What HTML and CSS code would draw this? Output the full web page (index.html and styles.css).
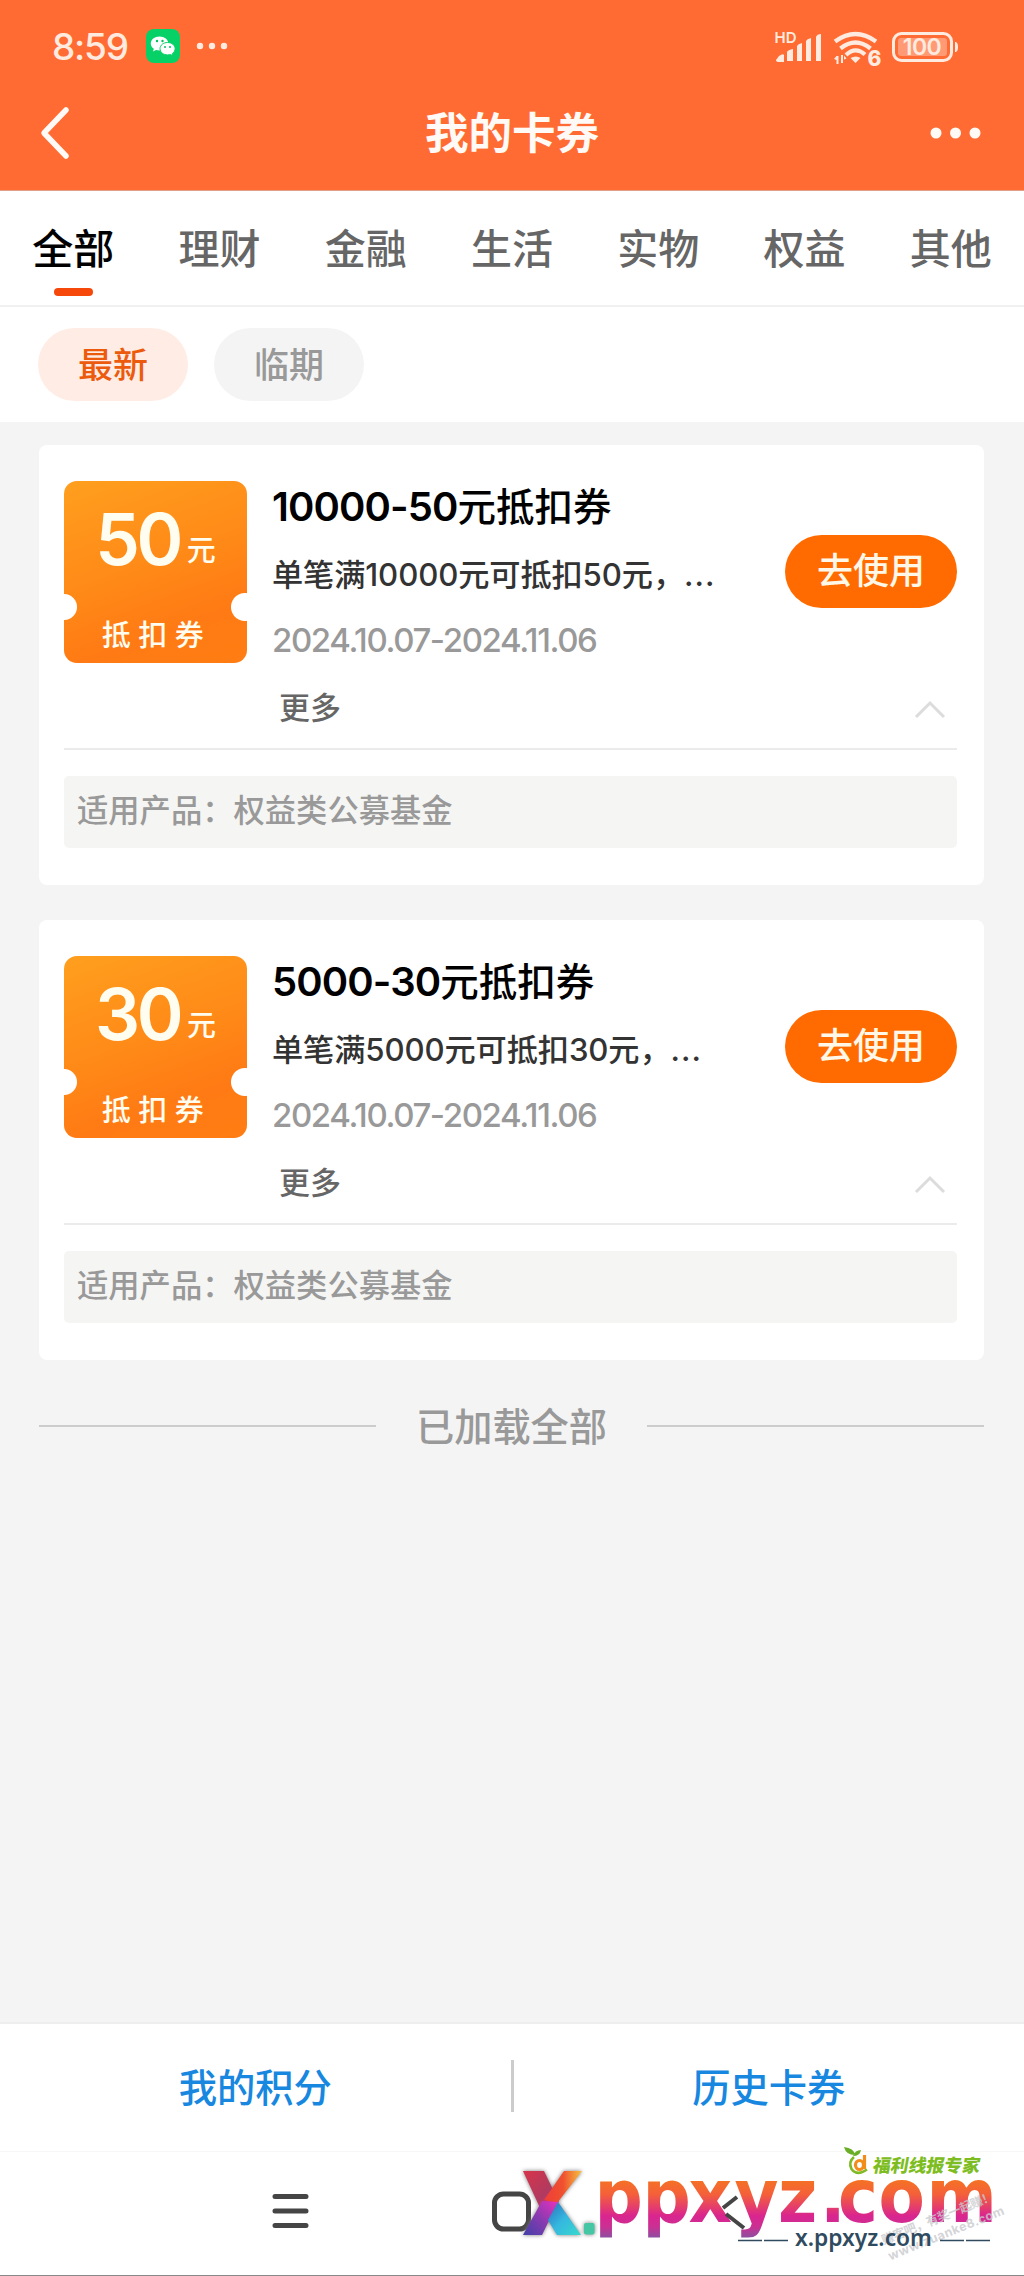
FILE: index.html
```html
<!DOCTYPE html>
<html lang="zh-CN">
<head>
<meta charset="utf-8">
<title>我的卡券</title>
<link rel="stylesheet" href="styles.css">
</head>
<body>
<div class="screen">
  <header class="header">
    <div class="status">
      <div class="status-left">
        <span class="time">8:59</span>
        <svg class="wechat" width="36" height="36" viewBox="0 0 36 36">
          <rect x="1" y="1" width="34" height="34" rx="8" fill="#06d166"/>
          <path d="M14.500 8.500c-5 0-8.700 3.100-8.700 7 0 2.200 1.100 4 3 5.300l-.8 2.700 3-1.500c1 .3 2.200.5 3.500.5 5 0 8.800-3 8.800-7s-3.800-7-8.800-7z" fill="#fff"/>
          <path d="M22.600 14.500c-4.300 0-7.600 2.700-7.600 6.200s3.300 6.200 7.600 6.200c1 0 2-.1 2.900-.4l2.500 1.300-.6-2.300c1.700-1.200 2.700-2.900 2.700-4.800 0-3.500-3.300-6.200-7.500-6.200z" fill="#fff" stroke="#06d166" stroke-width="1"/>
          <g fill="#06c160"><circle cx="12" cy="13" r="1.200"/><circle cx="17.500" cy="13" r="1.200"/><circle cx="20" cy="19" r="1"/><circle cx="25" cy="19" r="1"/></g>
        </svg>
        <svg width="34" height="10" viewBox="0 0 34 10" fill="#ffeadf"><circle cx="5" cy="5" r="3.200"/><circle cx="17" cy="5" r="3.200"/><circle cx="29" cy="5" r="3.200"/></svg>
      </div>
      <svg class="status-icons" width="186" height="48" viewBox="0 0 186 48">
        <g fill="#ffeadf">
          <text class="hd" x="0.500" y="15.500" textLength="22" lengthAdjust="spacingAndGlyphs">HD</text>
          <path d="M2 33l3-4q4-3 5-1v7H5q-3 0-3-2zM13 25q1-2 6-3v12h-6zM23 19q1-2 5-3v18h-5zM32 14q1-2 5-3v23h-5zM42 10q1-3 5-3v27h-5z"/>
          <text class="six" x="93.500" y="39">6</text>
          <path d="M76.500 31q5.500-3 10 0L81.500 36zM60 32l2.500-3h2v8h-2v-4zM67 28h2v8h-2zM70 28.500l2.500 3-2.500 1z"/>
          <path d="M181 15h1q2 1 2 5t-2 5h-1z"/>
        </g>
        <path d="M61 14.500q20.500-15 41 0M66.500 21.500q15-12 30 0M72 28q9.500-9 19-.5" fill="none" stroke="#ffeadf" stroke-width="4.200"/>
        <rect x="119.500" y="6.500" width="58" height="27" rx="8" fill="none" stroke="#ffeadf" stroke-width="3"/>
        <rect x="124" y="11" width="49" height="18" rx="3" fill="#ff9a74"/>
        <text class="battery" x="148" y="28" text-anchor="middle" fill="#ffeadf">100</text>
      </svg>
    </div>
    <div class="navbar">
      <svg width="60" height="60" viewBox="0 0 60 60"><path d="M34 7L12 30l22 23" fill="none" stroke="#fffaf5" stroke-width="5.500" stroke-linecap="round" stroke-linejoin="round"/></svg>
      <h1 class="title">我的卡券</h1>
      <svg width="60" height="20" viewBox="0 0 60 20" fill="#fffaf5"><circle cx="14" cy="10" r="5.500"/><circle cx="33.500" cy="10" r="5.500"/><circle cx="53" cy="10" r="5.500"/></svg>
    </div>
  </header>

  <nav class="tabs">
    <a class="tab active">全部</a><a class="tab">理财</a><a class="tab">金融</a><a class="tab">生活</a><a class="tab">实物</a><a class="tab">权益</a><a class="tab">其他</a>
  </nav>
  <div class="filters"><span class="pill selected">最新</span><span class="pill">临期</span></div>

  <main class="list">
    <article class="card">
      <div class="card-main">
        <div class="coupon">
          <div class="amount">50<small>元</small></div>
          <div class="kind">抵扣券</div>
        </div>
        <div class="info">
          <h2 class="name"><span class="digits">10000-50</span>元抵扣券</h2>
          <p class="desc">单笔满10000元可抵扣50元，<span class="more-dots">...</span></p>
          <p class="date">2024.10.07-2024.11.06</p>
        </div>
        <button class="use">去使用</button>
      </div>
      <div class="more"><span>更多</span>
        <svg width="34" height="20" viewBox="0 0 34 20"><path d="M3 17L17 3l14 14" fill="none" stroke="#dcdcdc" stroke-width="3"/></svg>
      </div>
      <div class="scope">适用产品：权益类公募基金</div>
    </article>
    <article class="card">
      <div class="card-main">
        <div class="coupon">
          <div class="amount">30<small>元</small></div>
          <div class="kind">抵扣券</div>
        </div>
        <div class="info">
          <h2 class="name"><span class="digits">5000-30</span>元抵扣券</h2>
          <p class="desc">单笔满5000元可抵扣30元，<span class="more-dots">...</span></p>
          <p class="date">2024.10.07-2024.11.06</p>
        </div>
        <button class="use">去使用</button>
      </div>
      <div class="more"><span>更多</span>
        <svg width="34" height="20" viewBox="0 0 34 20"><path d="M3 17L17 3l14 14" fill="none" stroke="#dcdcdc" stroke-width="3"/></svg>
      </div>
      <div class="scope">适用产品：权益类公募基金</div>
    </article>
    <div class="end"><span>已加载全部</span></div>
  </main>

  <footer class="links"><a>我的积分</a><i></i><a>历史卡券</a></footer>
  <div class="sysnav">
    <svg width="1024" height="124" viewBox="0 0 1024 124" fill="none" stroke="#454545" stroke-width="5" stroke-linecap="round" stroke-linejoin="round">
      <path d="M275 44.500h31M275 59h31M275 73.500h31"/>
      <rect x="494.500" y="42" width="34" height="35" rx="9"/>
    </svg>
  </div>

  <svg class="watermark" width="544" height="136" viewBox="480 2140 544 136">
    <defs>
      <linearGradient id="site" gradientUnits="userSpaceOnUse" x1="0" y1="2180" x2="0" y2="2238">
        <stop offset="0" stop-color="#f57224"/><stop offset=".25" stop-color="#f4603a"/><stop offset=".62" stop-color="#d9258f"/><stop offset=".8" stop-color="#cc2f92"/><stop offset="1" stop-color="#8a50a0"/>
      </linearGradient>
      <linearGradient id="warm" x1="0" y1="0" x2="1" y2="0"><stop offset="0" stop-color="#ee3e38"/><stop offset=".5" stop-color="#f0502f"/><stop offset="1" stop-color="#f6c340"/></linearGradient>
      <linearGradient id="rose" x1="0" y1="0" x2="1" y2="1"><stop offset="0" stop-color="#d8344a"/><stop offset=".6" stop-color="#b03a60"/><stop offset="1" stop-color="#f02aa0"/></linearGradient>
      <linearGradient id="cool" x1="0" y1="0" x2="1" y2="1"><stop offset="0" stop-color="#2b6cb8"/><stop offset=".5" stop-color="#35b8e0"/><stop offset="1" stop-color="#38d8cc"/></linearGradient>
      <linearGradient id="violet" x1="1" y1="0" x2="0" y2="1"><stop offset="0" stop-color="#e832c0"/><stop offset=".5" stop-color="#8a3ab0"/><stop offset="1" stop-color="#4040a8"/></linearGradient>
      <clipPath id="cut"><rect x="590" y="2170" width="410" height="67.500"/></clipPath>
    </defs>
    <g class="x-mark">
      <path d="M523 2171h21l15 31-18 8z" fill="url(#rose)"/>
      <path d="M582 2171h-18l-20 29 13 3z" fill="url(#warm)"/>
      <path d="M558 2202l-16-1-19 34h19z" fill="url(#violet)"/>
      <path d="M558 2202l-10 18 9 15h24z" fill="url(#cool)"/>
      <rect x="584" y="2223" width="10.500" height="11.500" rx="2" fill="#45c6a5"/>
    </g>
    <g clip-path="url(#cut)"><text class="site" transform="scale(.9 1)" x="660.500 714 765 816 864.500 911 931 976 1029.500" y="2222" fill="url(#site)">ppxyz.com</text></g>
    <path d="M737 2197l-14 11M726 2214l18 14" fill="none" stroke="#454545" stroke-width="4"/>
    <g class="slogan" transform="rotate(-22 882 2240)">
      <text x="882" y="2245" textLength="120">赚客吧，有奖一起赚！</text>
      <text x="882" y="2262" textLength="124">www.zuanke8.com</text>
    </g>
    <text class="domain" x="795" y="2246" textLength="137" lengthAdjust="spacingAndGlyphs">x.ppxyz.com</text>
    <path d="M738 2240.500h24M764 2240.500h24M940 2240.500h24M966 2240.500h24" stroke="#304b5f" stroke-width="1.300"/>
    <g transform="translate(15 0)">
      <path d="M829 2147q10 1 11 8-9 0-11-8zM838 2156q2-6 8-6-1 6-8 6z" fill="#69ae25"/>
      <path d="M839 2157q-6 5-2.500 12 5.500 7.500 15.500.5" fill="none" stroke="#80ba27" stroke-width="2.600"/>
      <ellipse cx="844.500" cy="2165" rx="4" ry="4.500" fill="none" stroke="#f28c1b" stroke-width="3.200"/>
      <path d="M849.500 2155v14" stroke="#f28c1b" stroke-width="3.200"/>
    </g>
    <text class="expert" x="872" y="2172" textLength="107" lengthAdjust="spacingAndGlyphs" transform="translate(383 0) skewX(-10)">福利线报专家</text>
  </svg>
</div>
</body>
</html>
```
FILE: styles.css
```css
* { box-sizing: border-box; }
body { margin: 0; font-family: Inter, "Noto Sans CJK SC", sans-serif; font-weight: 500; }
h1, h2, p { margin: 0; }
svg { display: block; flex: none; }
.screen { position: relative; display: flex; flex-direction: column; width: 1024px; height: 2276px; background: #f4f4f4; border-bottom: 1px solid #888; overflow: hidden; }

.header { height: 191px; background: #ff6b33; border-bottom: 1px solid #dfa08a; }
.status { display: flex; justify-content: space-between; height: 92px; padding: 0 64px 0 52px; }
.status-left { display: flex; align-items: center; height: 92px; }
.time { width: 93px; color: #ffeadf; font-size: 37px; letter-spacing: -1.200px; }
.wechat { margin-right: 14px; }
.status-icons { margin-top: 27px; }
.hd { font-size: 15px; font-weight: 600; }
.six { font-size: 21px; font-weight: 800; }
.battery { font-size: 23px; font-weight: 600; letter-spacing: -.5px; }
.navbar { display: flex; align-items: center; justify-content: space-between; height: 82px; padding: 0 42px 0 32px; }
.title { margin-left: 10px; color: #fffaf5; font-size: 43.500px; font-weight: 700; line-height: 60px; }

.tabs { display: flex; height: 116px; background: #fff; border-bottom: 2px solid #f1f1f1; }
.tab { display: flex; flex: 1; flex-direction: column; align-items: center; padding-top: 28px; color: #666; font-size: 41px; line-height: 60px; }
.tab.active { color: #000; }
.tab.active::after { content: ""; width: 39px; height: 8px; margin-top: 9px; border-radius: 4px; background: #f7480c; }
.filters { display: flex; gap: 26px; height: 115px; padding: 21px 38px; background: #fff; }
.pill { width: 150px; height: 73px; border-radius: 37px; background: #f4f4f4; color: #999; font-size: 35px; line-height: 74px; text-align: center; }
.pill.selected { background: #ffede5; color: #ec5b0d; }

.list { flex: 1; padding: 23px 40px 0 39px; }
.card { height: 440px; margin-bottom: 35px; padding: 36px 27px 0 25px; border-radius: 8px; background: #fff; }
.card-main { display: flex; height: 194px; }
.coupon { flex: none; width: 183px; height: 182px; padding-top: 22px; border-radius: 13px; color: #fffdf0; text-align: center;
  background: radial-gradient(circle at 0 126px, #fff 12.500px, transparent 13.500px), radial-gradient(circle at 181px 126px, #fff 13.500px, transparent 14.500px), linear-gradient(160deg, #ff9f1e, #ff8817 50%, #ff7a14 75%, #ff7d13); }
.amount { height: 72px; font-size: 71px; font-weight: 600; line-height: 72px; letter-spacing: -3.500px; }
.amount small { position: relative; top: -4px; margin-left: 7px; font-size: 29px; font-weight: 500; letter-spacing: 0; }
.kind { margin-top: 39px; padding-left: 2px; font-size: 29px; font-weight: 500; line-height: 44px; letter-spacing: 7.500px; }
.info { flex: 1; min-width: 0; padding-left: 25px; white-space: nowrap; }
.name { font-size: 38.500px; font-weight: 500; line-height: 52px; color: #000; }
.digits { font-size: 40px; font-weight: 600; letter-spacing: -.9px; }
.desc { margin-top: 20px; color: #333; font-size: 31.200px; font-weight: 500; line-height: 44px; letter-spacing: -.1px; }
.more-dots { letter-spacing: 1px; }
.date { margin-top: 22px; color: #999; font-size: 33px; font-weight: 500; line-height: 42px; letter-spacing: -1.400px; }
.use { flex: none; width: 172px; height: 73px; margin-top: 54px; padding: 0; border: 0; border-radius: 37px; background: #ff6b00; color: #fff8e8; font: 500 36px/73px Inter, "Noto Sans CJK SC", sans-serif; }
.more { display: flex; align-items: center; justify-content: space-between; height: 75px; padding: 0 10px 13px 215px; border-bottom: 2px solid #ebebeb; color: #666; font-size: 31px; }
.more svg { margin-top: 10px; }
.scope { height: 72px; margin-top: 26px; padding-left: 13px; border-radius: 5px; background: #f5f5f3; color: #999; font-size: 31.300px; line-height: 71px; }
.end { display: flex; align-items: center; gap: 40px; height: 62px; color: #999; font-size: 38.200px; white-space: nowrap; }
.end span { padding-bottom: 3px; }
.end::before, .end::after { content: ""; flex: 1; height: 2px; background: #ccc; }

.links { display: flex; align-items: center; height: 129px; padding-bottom: 4px; border-top: 2px solid #eee; background: #fff; }
.links a { flex: 1; color: #1787df; font-size: 38.300px; text-align: center; }
.links i { width: 3px; height: 52px; background: #ccc; }
.sysnav { height: 124px; border-top: 1px solid #f7f7f7; background: #fff; }

.watermark { position: absolute; left: 480px; top: 2140px; }
.site { font-family: "DejaVu Sans", sans-serif; font-size: 75px; font-weight: 700; }
.domain { font-family: "Noto Sans", sans-serif; font-size: 24px; font-weight: 600; fill: #304b5f; }
.expert { font-size: 18px; font-weight: 900; fill: #7dbd22; }
.slogan { font-size: 12.500px; font-weight: 700; fill: #c9c9cd; fill-opacity: .8; }
.x-mark { filter: drop-shadow(0 0 2px #777); }
```
